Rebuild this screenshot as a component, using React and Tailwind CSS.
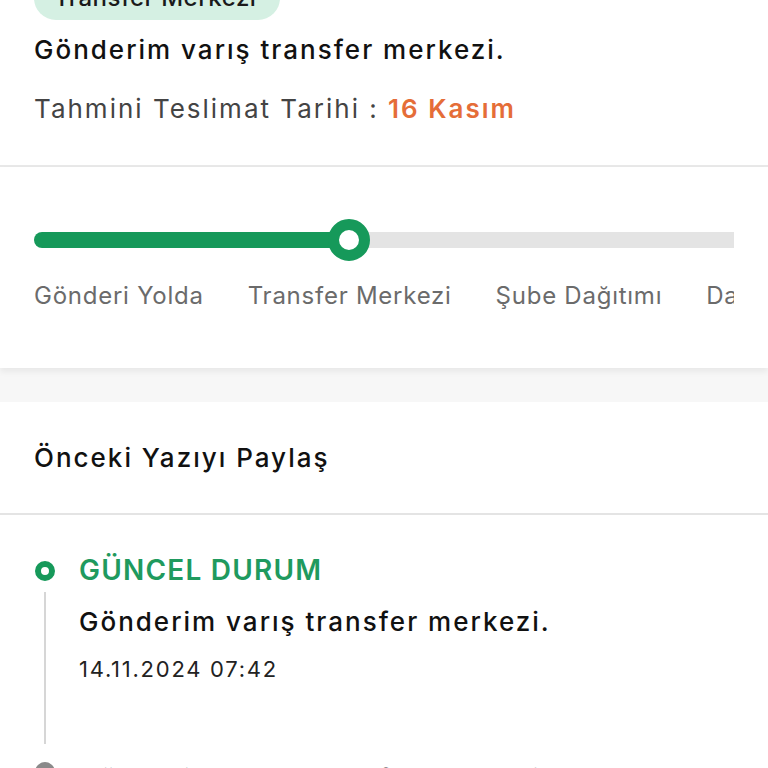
import React from "react";

export default function App() {
  const steps = ["Gönderi Yolda", "Transfer Merkezi", "Şube Dağıtımı", "Dağıtımda", "Teslim Edildi"];
  return (
    <div className="w-[768px] h-[768px] overflow-hidden bg-white" style={{ fontFamily: "Inter, 'Noto Sans', sans-serif" }}>
      <div className="-mt-[24px]">
        {/* Top section */}
        <div className="px-[34px] pb-[38px]">
          <div className="inline-flex h-[44px] items-center rounded-[22px] bg-[#d5f0e3] px-[20px] w-[246px]">
            <span className="text-[24px] font-medium text-[#1a1a1a] leading-none whitespace-nowrap tracking-[0.5px]">Transfer Merkezi</span>
          </div>
          <div className="mt-[12px] text-[26px] font-medium leading-[36px] text-[#111] tracking-[2px]">Gönderim varış transfer merkezi.</div>
          <div className="mt-[23px] text-[26px] leading-[36px] text-[#444] tracking-[2px]">
            Tahmini Teslimat Tarihi : <span className="font-semibold text-[#e56d38]">16 Kasım</span>
          </div>
        </div>
        <div className="h-[2px] bg-[#e8e8e8]" />

        {/* Progress section */}
        <div className="pt-[52px] pb-[56px] shadow-[0_4px_6px_rgba(0,0,0,0.06)] relative">
          <div className="mx-[34px] overflow-hidden">
            <div className="w-max">
              <div className="relative h-[42px] flex items-center">
                <div className="w-[315px] h-[16px] rounded-l-full bg-[#16995a]" />
                <div className="flex-1 h-[16px] bg-[#e4e4e4]" />
                <div className="absolute left-[294px] top-0 w-[42px] h-[42px] rounded-full border-[11px] border-[#16995a] bg-white" />
              </div>
              <div className="mt-[19px] flex gap-[44px] text-[24px] leading-[32px] text-[#6b6b6b] whitespace-nowrap tracking-[0.75px]">
                {steps.map((s) => (
                  <span key={s}>{s}</span>
                ))}
              </div>
            </div>
          </div>
        </div>
        <div className="h-[34px] bg-[#f7f7f7]" />

        {/* Share section */}
        <div className="px-[34px] h-[111px] flex items-center">
          <span className="text-[26px] font-medium text-[#111] tracking-[2px]">Önceki Yazıyı Paylaş</span>
        </div>
        <div className="h-[2px] bg-[#e4e4e4]" />

        {/* Timeline */}
        <div className="px-[35px] pt-[46px]">
          <div className="flex">
            <div className="flex flex-col items-center w-[20px]">
              <div className="w-[20px] h-[20px] rounded-full border-[6px] border-[#16995a] bg-white" />
              <div className="mt-[11px] w-[2px] h-[152px] bg-[#d6d6d6]" />
            </div>
            <div className="ml-[24px] -mt-[10px]">
              <div className="text-[28px] font-semibold leading-[38px] text-[#1f9a5e] tracking-[1.2px]">GÜNCEL DURUM</div>
              <div className="mt-[15px] text-[26px] font-medium leading-[36px] text-[#111] tracking-[2px]">Gönderim varış transfer merkezi.</div>
              <div className="mt-[14px] text-[22px] leading-[30px] text-[#222] tracking-[1.75px]">14.11.2024 07:42</div>
            </div>
          </div>
          <div className="flex mt-[18px]">
            <div className="w-[20px] h-[20px] rounded-full border-[6px] border-[#8a8a8a] bg-white shrink-0" />
            <div className="ml-[24px] -mt-[1px] text-[26px] font-medium leading-[36px] text-[#333] tracking-[2px] whitespace-nowrap">Gönderim varış transfer merkezi.</div>
          </div>
        </div>
      </div>
    </div>
  );
}
